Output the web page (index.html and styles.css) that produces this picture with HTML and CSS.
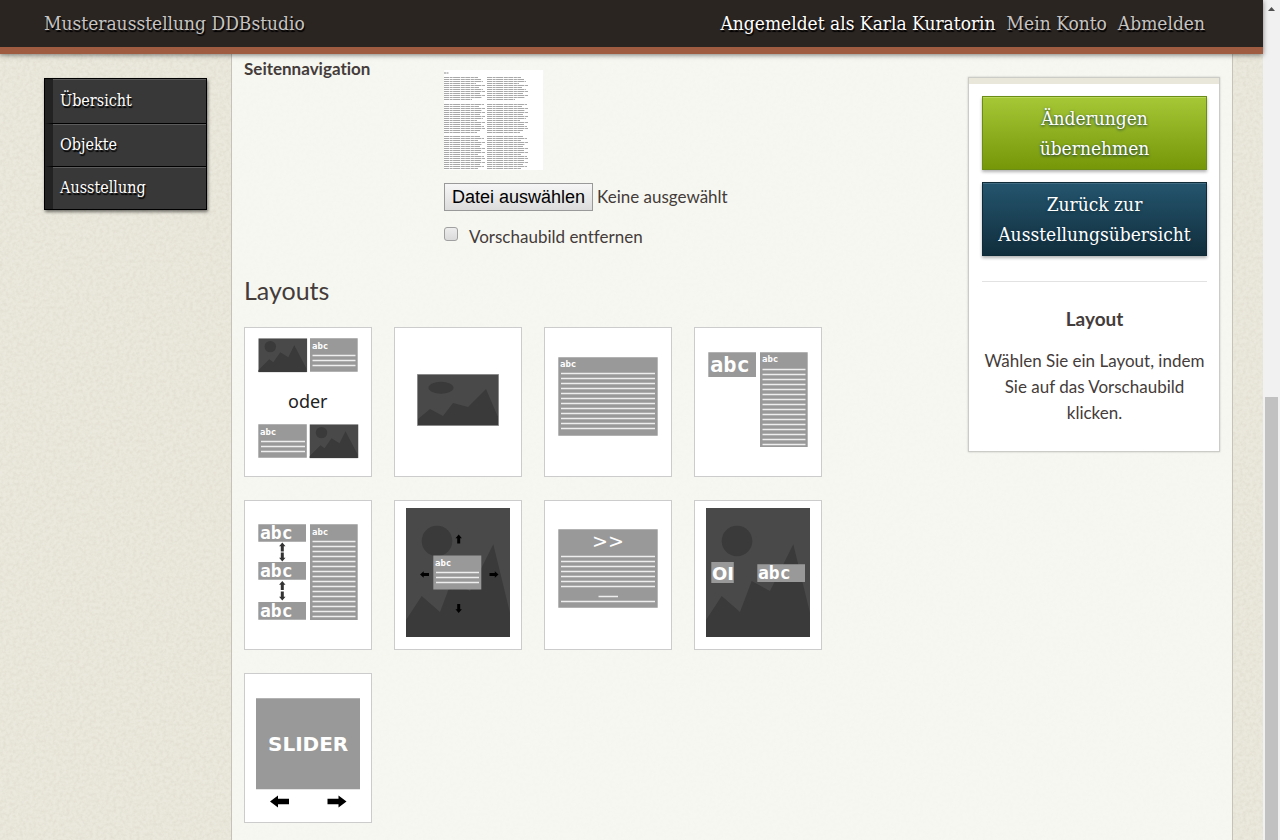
FILE: index.html
```html
<!DOCTYPE html>
<html lang="de">
<head>
<meta charset="utf-8">
<title>Musterausstellung DDBstudio</title>
<link rel="stylesheet" href="styles.css">
</head>
<body>
<svg class="defs" aria-hidden="true">
  <defs>
    <symbol id="scene" viewBox="0 0 104 129">
      <path fill="#494949" d="M0 0h104v129H0z"/>
      <circle cx="31" cy="33" r="15.3" fill="#3a3a3a"/>
      <path fill="#3a3a3a" d="M0 112L15.700 88l18.300 16 11.700-31L64 83l23.300-46.700L104 105v24H0z"/>
    </symbol>
    <symbol id="scene-wide" viewBox="0 0 49 34">
      <path fill="#494949" d="M0 0h49v34H0z"/>
      <circle cx="12" cy="8.300" r="5.700" fill="#3a3a3a"/>
      <path fill="#3a3a3a" d="M0 32l11-11 4 3 7-10 8 5 6-12 12 23v4H0z"/>
    </symbol>
    <path id="arrow" d="M0-4.500L3.200-.8H1.500V4.500h-3V-.8h-1.700z"/>
    <path id="bigarrow" d="M0 0l8-6v3.200h11v5.600H8V6z"/>
  </defs>
</svg>
<div class="page">
  <svg class="grain" aria-hidden="true">
    <filter id="noise" x="0" y="0" width="100%" height="100%">
      <feTurbulence type="fractalNoise" baseFrequency="0.3" numOctaves="3"/>
      <feColorMatrix values="0 0 0 0 .45  0 0 0 0 .42  0 0 0 0 .3  0.3 0 0 0 -.1"/>
    </filter>
    <rect width="100%" height="100%" filter="url(#noise)"/>
  </svg>
  <header class="topbar">
    <a class="brand" href="#">Musterausstellung DDBstudio</a>
    <div class="account">
      <span class="user">Angemeldet als Karla Kuratorin</span>
      <a href="#">Mein Konto</a>
      <a href="#">Abmelden</a>
    </div>
  </header>
  <div class="columns">
    <nav class="menu">
      <a href="#">Übersicht</a>
      <a href="#">Objekte</a>
      <a href="#">Ausstellung</a>
    </nav>
    <main class="content">
      <div class="editor">
        <section class="field">
          <h2 class="label">Seitennavigation</h2>
          <div class="field-body">
            <svg class="preview" viewBox="0 0 99 100" aria-hidden="true">
              <path fill="#fff" d="M0 0h99v100H0z"/>
              <path stroke="#888" d="M0 3h5" stroke-dasharray="2 .5"/>
              <g stroke="#a8a8a8" stroke-width="1" stroke-dasharray="5 .6 3 .5 7 .7 4 .5">
                <path id="col" d="M0 7.500h34M0 9.500h37M0 11.500h39M0 13.500h32M0 15.500h41M0 17.500h35M0 19.500h39M0 21.500h41M0 23.500h36M0 25.500h41M0 27.500h38M0 29.500h28M0 34.500h40M0 36.500h35M0 38.500h41M0 40.500h38M0 42.500h41M0 44.500h36M0 46.500h41M0 48.500h39M0 50.500h33M0 52.500h41M0 54.500h37M0 56.500h40M0 58.500h41M0 60.500h36M0 62.500h33M0 66.500h36M0 68.500h40M0 70.500h34M0 72.500h41M0 74.500h38M0 76.500h36M0 78.500h41M0 80.500h37M0 82.500h41M0 84.500h34M0 86.500h40M0 88.500h41M0 90.500h37M0 92.500h41M0 94.500h36M0 96.500h40M0 98.500h34"/>
                <use href="#col" x="43"/>
              </g>
            </svg>
            <div class="file">
              <button class="file-button" type="button">Datei auswählen</button>
              <span>Keine ausgewählt</span>
            </div>
            <div class="check">
              <input type="checkbox" id="remove">
              <label for="remove">Vorschaubild entfernen</label>
            </div>
          </div>
        </section>
        <h1>Layouts</h1>
        <div class="layouts">
          <button class="layout" type="button">
            <svg viewBox="0 0 126 148">
              <use href="#scene-wide" x="13.300" y="10.300" width="49" height="34"/>
              <path class="box" d="M65 10.300h47.700v33.500H65zM13.300 96.300h48.500v33.500H13.300z"/>
              <use href="#scene-wide" x="64.500" y="96.300" width="49" height="34"/>
              <path class="lines" d="M67.500 27.500h43m-43 5h43m-43 5h43M16 113.500h44m-44 5h44m-44 5h44"/>
              <text class="small" x="67" y="21">abc</text>
              <text class="small" x="15" y="107">abc</text>
              <text class="or" x="43" y="80">oder</text>
            </svg>
          </button>
          <button class="layout" type="button">
            <svg viewBox="0 0 126 148">
              <path fill="#494949" stroke="#8a8a8a" d="M22.500 46.500h81v51h-81z"/>
              <ellipse cx="46" cy="59.700" rx="12.500" ry="6" fill="#3a3a3a"/>
              <path fill="#3a3a3a" d="M23 91l12-10 13 7 10-13 15 4 18-18 12 28v8H23z"/>
            </svg>
          </button>
          <button class="layout" type="button">
            <svg viewBox="0 0 126 148">
              <path class="box" d="M13.300 29.300h99.400v78.500H13.300z"/>
              <path class="lines" d="M16 45.500h94m-94 5h94m-94 5h94m-94 5h94m-94 5h94m-94 5h94m-94 5h94m-94 5h94m-94 5h94m-94 5h94m-94 5h94m-94 5h94"/>
              <text class="small" x="15" y="39">abc</text>
            </svg>
          </button>
          <button class="layout" type="button">
            <svg viewBox="0 0 126 148">
              <path class="box" d="M13.300 24.300H61V49H13.300zM65 24.300h47.700V119H65z"/>
              <path class="lines" d="M67.500 41.500h43m-43 5h43m-43 5h43m-43 5h43m-43 5h43m-43 5h43m-43 5h43m-43 5h43m-43 5h43m-43 5h43m-43 5h43m-43 5h43m-43 5h43m-43 5h43m-43 5h43m-43 5h43"/>
              <text class="large" x="15" y="44">abc</text>
              <text class="small" x="67" y="34">abc</text>
            </svg>
          </button>
          <button class="layout" type="button">
            <svg viewBox="0 0 126 148">
              <path class="box" d="M13.300 23.300H61v17.500H13.300zM13.300 61H61v17.700H13.300zM13.300 101H61v17.700H13.300zM65 23.300h47.700V119H65z"/>
              <path class="lines" d="M67.500 40.500h43m-43 5h43m-43 5h43m-43 5h43m-43 5h43m-43 5h43m-43 5h43m-43 5h43m-43 5h43m-43 5h43m-43 5h43m-43 5h43m-43 5h43m-43 5h43m-43 5h43m-43 5h43"/>
              <text class="medium" x="15" y="38">abc</text>
              <text class="medium" x="15" y="76">abc</text>
              <text class="medium" x="15" y="116">abc</text>
              <text class="small" x="67" y="34">abc</text>
              <g fill="#333">
                <use href="#arrow" x="37.300" y="46"/>
                <use href="#arrow" transform="translate(37.300 56) rotate(180)"/>
                <use href="#arrow" x="37.300" y="84.500"/>
                <use href="#arrow" transform="translate(37.300 95) rotate(180)"/>
              </g>
            </svg>
          </button>
          <button class="layout" type="button">
            <svg viewBox="0 0 126 148">
              <use href="#scene" x="11" y="7" width="104" height="129"/>
              <path class="box" d="M38.300 54.500h48v34h-48z"/>
              <path class="lines" d="M41 71.500h43m-43 5h43m-43 5h43"/>
              <text class="small" x="40" y="65">abc</text>
              <use href="#arrow" x="63.700" y="38"/>
              <use href="#arrow" transform="translate(63.700 107.500) rotate(180)"/>
              <use href="#arrow" transform="translate(29.500 73.500) rotate(-90)"/>
              <use href="#arrow" transform="translate(99 73.500) rotate(90)"/>
            </svg>
          </button>
          <button class="layout" type="button">
            <svg viewBox="0 0 126 148">
              <path class="box" d="M13.300 28.300h99.400v78.500H13.300z"/>
              <path class="lines" d="M16 55.500h94m-94 5h94m-94 5h94m-94 5h94m-94 5h94m-94 5h94m-94 5h94M53.500 95.500H73M16 100.500h94"/>
              <text class="more" x="47" y="47">&gt;&gt;</text>
            </svg>
          </button>
          <button class="layout" type="button">
            <svg viewBox="0 0 126 148">
              <use href="#scene" x="11" y="7" width="104" height="129"/>
              <path class="box" d="M16.300 61h22.500v21H16.300zM62.300 63.300H110V81H62.300z"/>
              <text class="number" x="17" y="79">OI</text>
              <text class="medium" x="63" y="78">abc</text>
            </svg>
          </button>
          <button class="layout" type="button">
            <svg viewBox="0 0 126 148">
              <path class="box" d="M11 24.300h104v91H11z"/>
              <text class="slider" x="23" y="77">SLIDER</text>
              <use href="#bigarrow" x="25" y="127.500"/>
              <use href="#bigarrow" transform="translate(101.500 127.500) rotate(180)"/>
            </svg>
          </button>
        </div>
      </div>
      <aside class="panel">
        <button class="action save" type="button">Änderungen übernehmen</button>
        <button class="action back" type="button">Zurück zur Ausstellungsübersicht</button>
        <hr>
        <h3>Layout</h3>
        <p>Wählen Sie ein Layout, indem Sie auf das Vorschaubild klicken.</p>
      </aside>
    </main>
  </div>
</div>
<div class="scrollbar" aria-hidden="true">
  <svg class="scroll-up" viewBox="0 0 17 17"><path fill="#505050" d="M5 11h7L8.500 7z"/></svg>
  <div class="thumb"></div>
</div>
</body>
</html>
```
FILE: styles.css
```css
* { box-sizing: border-box; }
body {
  margin: 0;
  min-height: 100vh;
  display: flex;
  background: #ebe9dd;
  color: #443c3a;
  font: 17px/26px Lato, "Open Sans", sans-serif;
  font-variant-ligatures: none;
}
a { color: inherit; text-decoration: none; }
h1, h2, h3, p { margin: 0; }
button { font: inherit; cursor: pointer; }
.defs { position: absolute; width: 0; height: 0; }
.page {
  position: relative;
  flex: 1;
  min-width: 0;
  display: flex;
  flex-direction: column;
}
.grain {
  position: absolute;
  inset: 0;
  width: 100%;
  height: 100%;
}
.topbar {
  position: relative;
  z-index: 2;
  display: flex;
  justify-content: space-between;
  height: 54px;
  padding: 0 58px 0 44px;
  background: #2b2522;
  border-bottom: 7px solid #9f5c40;
  box-shadow: 0 1px 5px rgba(0, 0, 0, .5);
  color: #c6c4c2;
  font: 19px/47px "DejaVu Serif Condensed", "DejaVu Serif", serif;
  text-shadow: 1px 2px 1px #000;
}
.account { display: flex; gap: 11px; }
.user { color: #fff; }
.columns {
  position: relative;
  flex: 1;
  display: flex;
}
.menu {
  flex: none;
  align-self: flex-start;
  width: 163px;
  margin: 24px 24px 0 44px;
  border: 1px solid #000;
  background: #383838;
  box-shadow: 1px 2px 3px rgba(0, 0, 0, .5);
}
.menu a {
  display: block;
  height: 44px;
  padding-left: 7px;
  border-left: 8px solid #222;
  box-shadow: inset 0 1px #5c5c5c;
  color: #fff;
  font: 16px/43px "DejaVu Serif Condensed", "DejaVu Serif", serif;
  text-shadow: 1px 2px 1px #000;
}
.menu a + a { height: 43px; border-top: 1px solid #000; line-height: 42px; }
.content {
  flex: 1;
  min-width: 0;
  display: flex;
  align-items: flex-start;
  gap: 24px;
  margin-right: 30px;
  padding: 0 12px 17px;
  background: rgba(248, 249, 245, .85);
  border: 1px solid #c4c2b9;
  border-width: 0 1px;
}
.editor { flex: 1; min-width: 0; }
.field { display: flex; padding-top: 2px; }
.label { width: 200px; font-size: 17px; line-height: 26px; }
.field-body { padding-top: 14px; }
.preview { display: block; width: 99px; height: 100px; }
.file { display: flex; align-items: center; gap: 4px; margin-top: 13px; }
.file-button {
  height: 28px;
  padding: 0 7px;
  border: 1px solid #999;
  background: linear-gradient(#f6f6f6, #dcdcdc);
  color: #000;
  font: 18px/24px "Liberation Sans", sans-serif;
}
.check { display: flex; gap: 11px; margin-top: 13px; }
.check input {
  appearance: none;
  width: 14px;
  height: 14px;
  margin: 3px 0 0;
  border: 1px solid #a0a0a0;
  border-radius: 3px;
  background: linear-gradient(#ececec, #dadada);
}
h1 { margin-top: 23px; font-size: 25px; line-height: 34px; font-weight: 400; }
.layouts {
  display: grid;
  grid-template-columns: repeat(4, 128px);
  gap: 23px 22px;
  margin-top: 20px;
}
.layout {
  height: 150px;
  padding: 0;
  border: 1px solid #ccc;
  background: #fff;
}
.layout svg { display: block; width: 126px; height: 148px; }
.layout text {
  fill: #fff;
  font-family: "DejaVu Sans Mono", monospace;
  font-weight: 700;
}
.box { fill: #999; }
.lines { stroke: #eee; stroke-width: 1.6; fill: none; }
.layout .small { font-size: 9px; }
.layout .medium { font-size: 18px; }
.layout .large { font-size: 22px; }
.layout .number { font-family: "DejaVu Sans", sans-serif; font-size: 18px; }
.layout .or { fill: #222; font-family: "Noto Sans", sans-serif; font-size: 18px; font-weight: 400; }
.layout .more { font-family: "DejaVu Sans", sans-serif; font-size: 19px; font-weight: 400; }
.layout .slider { font-family: "DejaVu Sans", sans-serif; font-size: 20px; }
.panel {
  flex: none;
  width: 252px;
  margin-top: 23px;
  padding: 12px 12px 25px 13px;
  border: 1px solid #cbcbc8;
  background: #fff;
  box-shadow: inset 0 6px #e9e7da, 0 0 2px rgba(0, 0, 0, .2);
  text-align: center;
}
.action {
  display: block;
  width: 100%;
  margin-top: 12px;
  padding: 6px 8px;
  color: #fff;
  font: 19px/30px "DejaVu Serif Condensed", "DejaVu Serif", serif;
  text-shadow: 0 1px 3px #123040;
}
.panel .save { margin-top: 6px; }
.save {
  padding: 6px 40px;
  border: 1px solid #6b8c15;
  background: linear-gradient(#a6c837, #759708);
  box-shadow: inset 0 1px #b8d65a, 0 2px 3px rgba(0, 0, 0, .3);
}
.back {
  border: 1px solid #102b38;
  background: linear-gradient(#24556e, #112e3c);
  box-shadow: inset 0 1px #426c82, 0 2px 3px rgba(0, 0, 0, .3);
}
hr { margin: 25px 0 0; border: 0; border-top: 1px solid #e2e2e2; }
h3 { margin: 24px 0 16px; font-size: 19px; line-height: 26px; }
.scrollbar {
  flex: none;
  width: 17px;
  display: flex;
  flex-direction: column;
  padding: 0 2px;
  background: #f1f1f1;
}
.scroll-up { width: 17px; height: 17px; margin-left: -2px; }
.thumb { flex: 1; margin-top: 380px; background: #c1c1c1; }
```
